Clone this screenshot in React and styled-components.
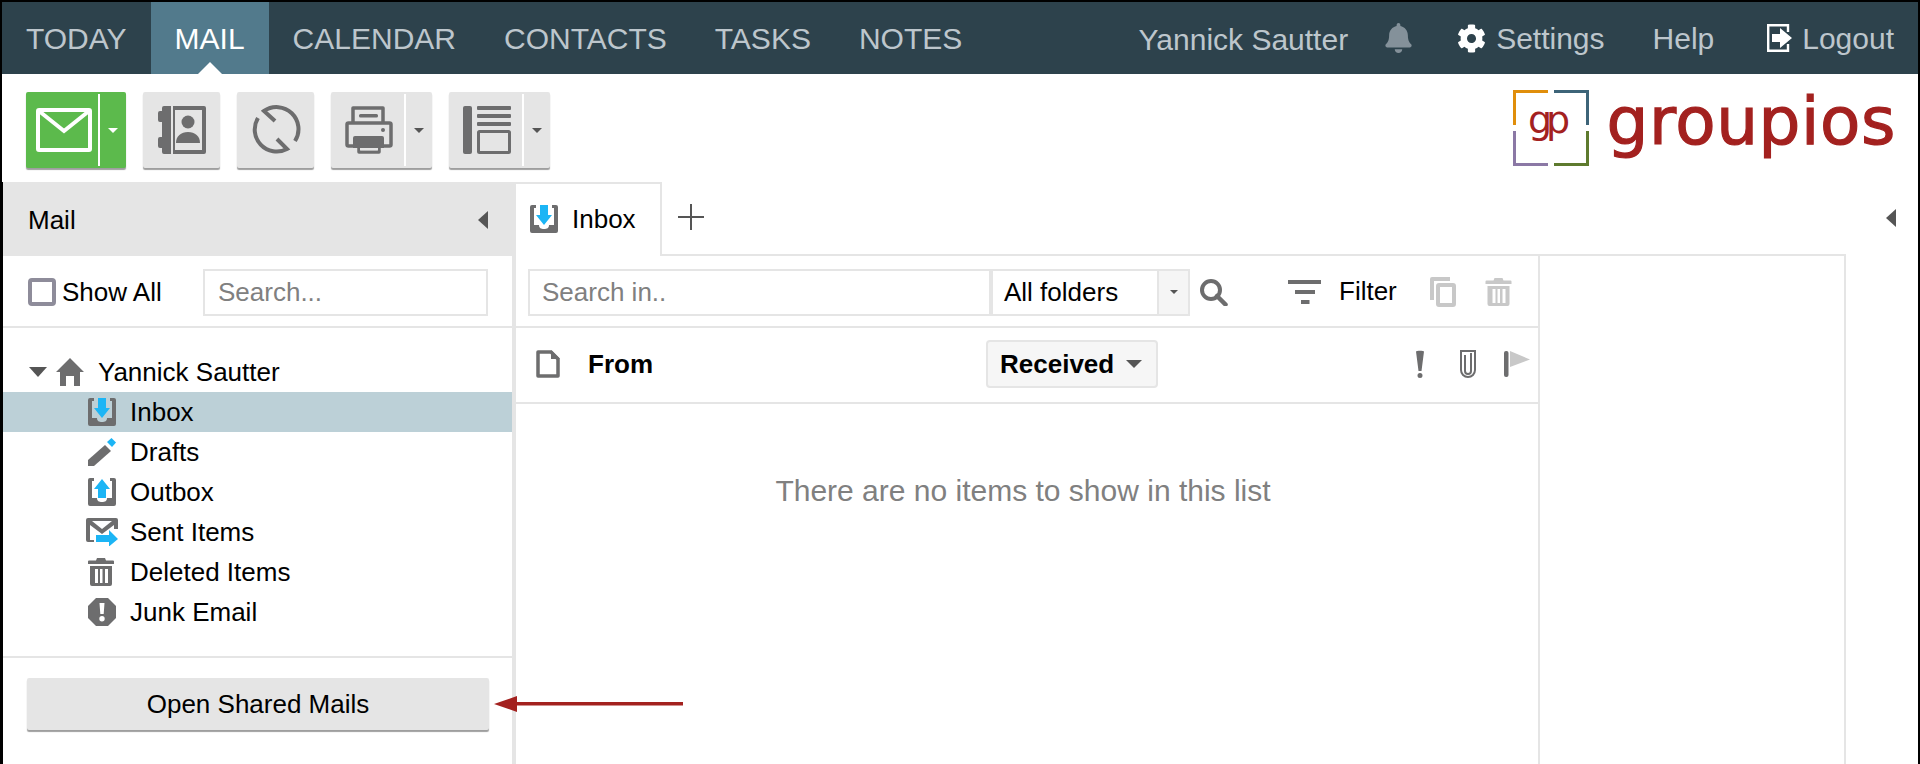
import React from 'react'
import styled, { createGlobalStyle } from 'styled-components'
import { FaBell, FaCog } from 'react-icons/fa'

const GlobalStyle = createGlobalStyle`
  html, body {
    margin: 0;
    height: 764px;
    overflow: hidden;
    background: white;
    font-family: "Liberation Sans", Arial, sans-serif;
    color: black;
  }
  * { box-sizing: border-box; }
`

const GRAY = '#6d6d6e'
const LINE = '#e5e5e5'
const BLUE = '#1cb5f5'

const Page = styled.div`
  position: relative;
  width: 1920px;
  height: 764px;
  overflow: hidden;
  border: solid black;
  border-width: 2px 2px 0 2px;
  display: flex;
  flex-direction: column;
`

/* top nav */
const Nav = styled.nav`
  height: 72px;
  flex: none;
  background: #2d424c;
  display: flex;
  align-items: stretch;
  font-size: 30px;
  color: #bdc6cc;
  padding-right: 24px;
`
const NavItem = styled.a`
  position: relative;
  display: flex;
  align-items: center;
  padding: 1px 24px 0;
  color: ${p => (p.$active ? 'white' : 'inherit')};
  background: ${p => (p.$active ? '#527a8c' : 'transparent')};
  &::after {
    content: '';
    display: ${p => (p.$active ? 'block' : 'none')};
    position: absolute;
    left: 50%;
    bottom: 0;
    margin-left: -12px;
    border-style: solid;
    border-width: 0 12px 12px 12px;
    border-color: transparent transparent white transparent;
  }
`
const NavRight = styled.div`
  margin-left: auto;
  display: flex;
  align-items: center;
`
const NavUser = styled.span`
  margin-right: 37px;
  margin-top: 3px;
`
const NavLink = styled.a`
  display: flex;
  align-items: center;
  gap: 10px;
  margin-top: 1px;
  margin-left: ${p => p.$gap}px;
  svg { flex: none; color: white; margin-top: -1px; }
`
const Bell = styled(FaBell)`
  color: #84919a;
  width: 27px;
  height: 30px;
`

/* toolbar */
const Toolbar = styled.div`
  height: 108px;
  flex: none;
  padding: 18px 22px 0 24px;
  display: flex;
  align-items: flex-start;
  gap: 17px;
`
const ToolButton = styled.div`
  height: 76px;
  width: ${p => p.$width}px;
  display: flex;
  border-radius: 2px;
  background: ${p => (p.$green ? '#5cba4c' : LINE)};
  box-shadow: 0 2px 1px rgba(0, 0, 0, 0.38);
`
const ToolMain = styled.div`
  flex: 1;
  display: flex;
  align-items: center;
  justify-content: center;
  padding-left: ${p => (p.$split ? 3 : 0)}px;
`
const ToolSplit = styled.div`
  width: 28px;
  flex: none;
  margin: 2px 0;
  border-left: 2px solid white;
  display: flex;
  align-items: center;
  justify-content: center;
`
const Caret = styled.span`
  display: block;
  border-style: solid;
  border-width: ${p => p.$h}px ${p => p.$w}px 0 ${p => p.$w}px;
  border-color: ${p => p.$color} transparent transparent transparent;
`
const Logo = styled.div`
  margin-left: auto;
  margin-top: -2px;
  display: flex;
  align-items: flex-start;
  gap: 17px;
`
const LogoWord = styled.span`
  font-family: "DejaVu Sans", sans-serif;
  font-size: 66px;
  line-height: 64px;
  color: #a3211f;
  letter-spacing: 0.6px;
  -webkit-text-stroke: 1.2px #a3211f;
`
const LogoMono = styled.text`
  font-family: "DejaVu Sans", sans-serif;
  font-size: 38px;
  letter-spacing: -6px;
  fill: #a3211f;
`

/* body */
const Body = styled.div`
  flex: 1;
  display: flex;
  min-height: 0;
`
const Sidebar = styled.aside`
  width: 514px;
  flex: none;
  border-left: 1px solid black;
  border-right: 4px solid ${LINE};
  display: flex;
  flex-direction: column;
`
const SideHead = styled.div`
  height: 74px;
  flex: none;
  background: ${LINE};
  margin-right: -4px;
  display: flex;
  align-items: center;
  justify-content: space-between;
  padding: 2px 28px 0 25px;
  font-size: 26px;
`
const LeftArrow = styled.span`
  display: block;
  border-style: solid;
  border-width: 9px 10px 9px 0;
  border-color: transparent #555 transparent transparent;
`
const SideFilter = styled.div`
  height: 72px;
  flex: none;
  border-bottom: 2px solid ${LINE};
  display: flex;
  align-items: center;
  padding: 2px 24px 0 25px;
  font-size: 26px;
`
const CheckBox = styled.span`
  width: 28px;
  height: 28px;
  margin-right: 6px;
  border: 4px solid #8e8c9a;
  border-radius: 4px;
`
const TextField = styled.input`
  border: 2px solid ${LINE};
  outline: none;
  background: white;
  font: inherit;
  color: black;
  padding: 0 13px;
  height: 47px;
  &::placeholder { color: #808080; opacity: 1; }
`
const SideSearch = styled(TextField)`
  width: 285px;
  margin-left: auto;
`
const Tree = styled.div`
  height: 330px;
  flex: none;
  padding-top: 24px;
  border-bottom: 2px solid ${LINE};
  font-size: 26px;
`
const TreeRoot = styled.div`
  height: 40px;
  display: flex;
  align-items: center;
  padding-left: 26px;
`
const TreeToggle = styled.span`
  display: block;
  border-style: solid;
  border-width: 10px 9px 0 9px;
  border-color: #555 transparent transparent transparent;
  margin-right: 9px;
`
const TreeRootLabel = styled.span`
  margin-left: 14px;
`
const TreeRow = styled.div`
  height: 40px;
  display: flex;
  align-items: center;
  gap: 14px;
  padding-left: 85px;
  background: ${p => (p.$active ? '#bcd0d7' : 'transparent')};
`
const SideFoot = styled.div`
  padding: 20px 0 0 24px;
`
const WideButton = styled.button`
  display: block;
  width: 462px;
  height: 52px;
  border: none;
  border-radius: 2px;
  background: ${LINE};
  box-shadow: 0 2px 1px rgba(0, 0, 0, 0.38);
  font: inherit;
  font-size: 26px;
  color: black;
`
const Pointer = styled.svg`
  position: absolute;
  left: 492px;
  top: 692px;
`

/* content */
const Content = styled.main`
  flex: 1;
  min-width: 0;
  display: flex;
  flex-direction: column;
`
const TabBar = styled.div`
  height: 74px;
  flex: none;
  display: flex;
`
const Tab = styled.div`
  width: 146px;
  border: solid ${LINE};
  border-width: 2px 2px 0 0;
  display: flex;
  align-items: center;
  gap: 14px;
  padding: 0 0 2px 14px;
  font-size: 26px;
`
const TabRest = styled.div`
  width: 1184px;
  border-bottom: 2px solid ${LINE};
  display: flex;
  align-items: center;
  padding: 0 0 2px 16px;
`
const TabEnd = styled.div`
  flex: 1;
  display: flex;
  align-items: center;
  justify-content: flex-end;
  padding: 0 22px 2px 0;
`
const Panel = styled.div`
  width: 1330px;
  flex: 1;
  min-height: 0;
  border-right: 2px solid ${LINE};
`
const List = styled.section`
  width: 1024px;
  height: 100%;
  border-right: 2px solid ${LINE};
`
const SearchRow = styled.div`
  height: 72px;
  border-bottom: 2px solid ${LINE};
  display: flex;
  align-items: center;
  padding: 2px 0 0 12px;
  font-size: 26px;
`
const SearchField = styled(TextField)`
  width: 463px;
  flex: none;
  padding: 0 12px;
`
const Select = styled.div`
  width: 199px;
  flex: none;
  height: 47px;
  border: 2px solid ${LINE};
  display: flex;
  align-items: center;
  padding-left: 11px;
`
const SelectCaret = styled.span`
  margin-left: auto;
  width: 31px;
  align-self: stretch;
  background: #f5f5f5;
  border-left: 2px solid ${LINE};
  display: flex;
  align-items: center;
  justify-content: center;
`
const FilterLabel = styled.span`
  margin: -2px 33px 0 18px;
`
const HeadRow = styled.div`
  height: 76px;
  border-bottom: 2px solid ${LINE};
  display: flex;
  align-items: center;
  padding: 0 0 2px 20px;
  font-size: 26px;
  font-weight: bold;
`
const FromLabel = styled.span`
  margin-left: 28px;
`
const SortButton = styled.div`
  width: 172px;
  flex: none;
  height: 48px;
  margin-left: 333px;
  border: 2px solid ${LINE};
  border-radius: 4px;
  background: #f6f6f6;
  display: flex;
  align-items: center;
  gap: 12px;
  padding-left: 12px;
`
const HeadIcons = styled.div`
  margin-left: 257px;
  display: flex;
  align-items: center;
  gap: 35px;
`
const Empty = styled.div`
  height: 174px;
  display: flex;
  align-items: center;
  justify-content: center;
  padding-right: 8px;
  font-size: 30px;
  color: #808080;
`
const Tone = styled.svg`
  flex: none;
  display: block;
  color: ${p => p.$color || GRAY};
  margin: ${p => p.$m || 0};
`

/* drawn icons */
const TrayBody = 'M2 0h4v3H4v17h5c0 3 2 4 5 4s5-1 5-4h5V3h-2V0h4a2 2 0 0 1 2 2v24a2 2 0 0 1-2 2H2a2 2 0 0 1-2-2V2a2 2 0 0 1 2-2z'

const InboxIcon = () => (
  <Tone width="28" height="28" viewBox="0 0 28 28">
    <path d={TrayBody} fill="currentColor" />
    <path d="M10 0h8v10h4l-8 10-8-10h4z" fill={BLUE} />
  </Tone>
)
const OutboxIcon = () => (
  <Tone width="28" height="28" viewBox="0 0 28 28">
    <path d={TrayBody} fill="currentColor" />
    <path d="M14 1l8 10h-4v9h-8v-9H6z" fill={BLUE} />
  </Tone>
)
const DraftsIcon = () => (
  <Tone width="28" height="28" viewBox="0 0 28 28">
    <path d="M0 22L17 7l6 6L6 28H0z" fill="currentColor" />
    <path d="M23.500 0L28 4.500 24 9l-5-5z" fill={BLUE} />
  </Tone>
)
const SentIcon = () => (
  <Tone width="32" height="28" viewBox="0 0 32 28" $m="0 -2px">
    <path d="M2 0h28a2 2 0 0 1 2 2v9h-4V7l-12 9L4 7v15h4v2H2a2 2 0 0 1-2-2V2a2 2 0 0 1 2-2zM6 3l10 8 10-8z" fill="currentColor" fillRule="evenodd" />
    <path d="M10 17h13v-5l9 9-9 7.500V24H10z" fill={BLUE} />
  </Tone>
)
const TrashIcon = ({ color, w = 26, h = 28, m = '0 2px 0 0' }) => (
  <Tone width={w} height={h} viewBox="0 0 26 28" $color={color} $m={m}>
    <path d="M9 0h8l1 2.500h7a1 1 0 0 1 1 1V6H0V3.500a1 1 0 0 1 1-1h7zM2 8h22v18a2 2 0 0 1-2 2H4a2 2 0 0 1-2-2zM7 11v14h3V11zm5 0v14h2.500V11zm5 0v14h3V11z" fill="currentColor" fillRule="evenodd" />
  </Tone>
)
const JunkIcon = () => (
  <Tone width="28" height="28" viewBox="0 0 28 28">
    <path d="M8 0h12l8 8v12l-8 8H8l-8-8V8zM11.500 5l.8 11h3.400l.8-11zM14 18a2.700 2.700 0 1 0 0 5.400 2.700 2.700 0 0 0 0-5.400z" fill="currentColor" fillRule="evenodd" />
  </Tone>
)
const HomeIcon = () => (
  <Tone width="28" height="28" viewBox="0 0 28 28">
    <path d="M14 0l14 14h-4v14H4V14H0zM10 18v10h8V18z" fill="currentColor" fillRule="evenodd" />
  </Tone>
)
const MailIcon = () => (
  <Tone width="56" height="44" viewBox="0 0 56 44" $color="white">
    <rect x="2" y="2" width="52" height="40" rx="1" fill="none" stroke="currentColor" strokeWidth="4" />
    <path d="M3 3l25 20L53 3" fill="none" stroke="currentColor" strokeWidth="4" />
  </Tone>
)
const BookIcon = () => (
  <Tone width="48" height="48" viewBox="0 0 48 48">
    <path d="M6 0h40a2 2 0 0 1 2 2v44a2 2 0 0 1-2 2H6a2 2 0 0 1-2-2v-4H2a2 2 0 0 1-2-2v-7a2 2 0 0 1 2-2h2V16H2a2 2 0 0 1-2-2V7a2 2 0 0 1 2-2h2V2a2 2 0 0 1 2-2z" fill="currentColor" />
    <rect x="17" y="4" width="27" height="40" fill={LINE} />
    <rect x="13" y="0" width="2" height="48" fill={LINE} />
    <circle cx="30" cy="16" r="6.500" fill="currentColor" />
    <path d="M18 37c0-7 5-11 12-11s12 4 12 11z" fill="currentColor" />
  </Tone>
)
const SyncIcon = () => (
  <Tone width="52" height="52" viewBox="0 0 52 52">
    <path d="M25 17L14 7A22 22 0 0 1 45 37M27 35l10 10A22 22 0 0 1 8 14" fill="none" stroke="currentColor" strokeWidth="4" />
  </Tone>
)
const PrintIcon = () => (
  <Tone width="48" height="48" viewBox="0 0 48 48">
    <path d="M8 16V2h30v14M14 40v6h20v-6" fill="none" stroke="currentColor" strokeWidth="3.500" strokeLinejoin="round" />
    <rect x="2" y="17" width="44" height="23" rx="1.500" fill="none" stroke="currentColor" strokeWidth="3.500" />
    <rect x="14" y="8" width="19" height="3.500" rx="1.500" fill="currentColor" />
    <circle cx="38" cy="24" r="2" fill="currentColor" />
    <path d="M10 30h27a2 2 0 0 1 2 2v10H8V32a2 2 0 0 1 2-2z" fill="currentColor" />
    <rect x="15" y="42" width="18" height="2.500" fill={LINE} />
  </Tone>
)
const LayoutIcon = () => (
  <Tone width="48" height="48" viewBox="0 0 48 48">
    <rect x="0" y="0" width="9" height="48" rx="2" fill="currentColor" />
    <rect x="14" y="0" width="34" height="4" rx="1" fill="currentColor" />
    <rect x="14" y="8" width="34" height="4" rx="1" fill="currentColor" />
    <rect x="14" y="16" width="34" height="4" rx="1" fill="currentColor" />
    <rect x="15.500" y="25.500" width="31" height="21" rx="1" fill="none" stroke="currentColor" strokeWidth="3" />
  </Tone>
)
const LogoutIcon = () => (
  <Tone width="25" height="28" viewBox="0 0 25 28" $color="white">
    <path d="M21 8V1.200H1.200v25.600H21V20" fill="none" stroke="currentColor" strokeWidth="2.400" />
    <path d="M5 10h8V4l12 10-12 10v-6H5z" fill="currentColor" />
  </Tone>
)
const SearchIcon = () => (
  <Tone width="28" height="27" viewBox="0 0 28 27" $m="0 0 0 10px">
    <circle cx="11" cy="11" r="9" fill="none" stroke="currentColor" strokeWidth="4" />
    <path d="M17 17l8.500 8.500" fill="none" stroke="currentColor" strokeWidth="4.500" strokeLinecap="round" />
  </Tone>
)
const FilterIcon = () => (
  <Tone width="33" height="24" viewBox="0 0 33 24" $m="0 0 0 60px">
    <path d="M0 0h33v4H0zM7 10h20v4H7zM13 20h8.500v4H13z" fill="currentColor" />
  </Tone>
)
const CopyIcon = () => (
  <Tone width="26" height="30" viewBox="0 0 26 30" $color="#c8c8c8" $m="0 29px 0 0">
    <path d="M2 0h18v4H4v19H0V2a2 2 0 0 1 2-2z" fill="currentColor" />
    <rect x="8" y="8" width="16" height="20" rx="1" fill="white" stroke="currentColor" strokeWidth="4" />
  </Tone>
)
const DocIcon = () => (
  <Tone width="24" height="28" viewBox="0 0 24 28">
    <path d="M2 2h13l7 7v17H2z" fill="none" stroke="currentColor" strokeWidth="3.500" strokeLinejoin="round" />
    <path d="M15 0l9 9h-9z" fill="currentColor" />
  </Tone>
)
const BangIcon = () => (
  <Tone width="10" height="28" viewBox="0 0 10 28">
    <path d="M1 1.500C1 .5 9 .5 9 1.500L6.500 21h-3zM5 23a2.500 2.500 0 1 1 0 5 2.500 2.500 0 0 1 0-5z" fill="currentColor" />
  </Tone>
)
const ClipIcon = () => (
  <Tone width="16" height="28" viewBox="0 0 16 28">
    <path d="M1 1h14v19a7 7 0 0 1-14 0zM5 5v16a3 3 0 0 0 6 0V3" fill="none" stroke="currentColor" strokeWidth="2" />
  </Tone>
)
const FlagIcon = () => (
  <Tone width="26" height="26" viewBox="0 0 26 26" $m="0 0 0 -7px">
    <rect x="0" y="0" width="4.500" height="26" rx="2" fill="currentColor" />
    <path d="M6 0l20 8.500L6 16z" fill="#c8c8c8" />
  </Tone>
)

const Mark = () => (
  <svg width="76" height="76" viewBox="0 0 76 76">
    <path d="M35 1.500H1.500V35" fill="none" stroke="#e08e0b" strokeWidth="3" />
    <path d="M41 1.500h33.500V35" fill="none" stroke="#3d6478" strokeWidth="3" />
    <path d="M35 74.500H1.500V41" fill="none" stroke="#8b78a5" strokeWidth="3" />
    <path d="M41 74.500h33.500V41" fill="none" stroke="#5e7a2e" strokeWidth="3" />
    <LogoMono x="15" y="43">gp</LogoMono>
  </svg>
)

const folders = [
  { name: 'Inbox', icon: InboxIcon, active: true },
  { name: 'Drafts', icon: DraftsIcon },
  { name: 'Outbox', icon: OutboxIcon },
  { name: 'Sent Items', icon: SentIcon },
  { name: 'Deleted Items', icon: TrashIcon },
  { name: 'Junk Email', icon: JunkIcon },
]

const App = () => (
  <Page>
    <GlobalStyle />
    <Nav>
      <NavItem>TODAY</NavItem>
      <NavItem $active>MAIL</NavItem>
      <NavItem>CALENDAR</NavItem>
      <NavItem>CONTACTS</NavItem>
      <NavItem>TASKS</NavItem>
      <NavItem>NOTES</NavItem>
      <NavRight>
        <NavUser>Yannick Sautter</NavUser>
        <Bell />
        <NavLink $gap={45}><FaCog size={29} />Settings</NavLink>
        <NavLink $gap={48}>Help</NavLink>
        <NavLink $gap={53}><LogoutIcon />Logout</NavLink>
      </NavRight>
    </Nav>

    <Toolbar>
      <ToolButton $green $width={100}>
        <ToolMain $split><MailIcon /></ToolMain>
        <ToolSplit><Caret $w={5} $h={5} $color="white" /></ToolSplit>
      </ToolButton>
      <ToolButton $width={77}><ToolMain><BookIcon /></ToolMain></ToolButton>
      <ToolButton $width={77}><ToolMain><SyncIcon /></ToolMain></ToolButton>
      <ToolButton $width={101}>
        <ToolMain $split><PrintIcon /></ToolMain>
        <ToolSplit><Caret $w={5} $h={5} $color="#555" /></ToolSplit>
      </ToolButton>
      <ToolButton $width={101}>
        <ToolMain $split><LayoutIcon /></ToolMain>
        <ToolSplit><Caret $w={5} $h={5} $color="#555" /></ToolSplit>
      </ToolButton>
      <Logo>
        <Mark />
        <LogoWord>groupios</LogoWord>
      </Logo>
    </Toolbar>

    <Body>
      <Sidebar>
        <SideHead>Mail<LeftArrow /></SideHead>
        <SideFilter>
          <CheckBox />
          Show All
          <SideSearch placeholder="Search..." readOnly />
        </SideFilter>
        <Tree>
          <TreeRoot>
            <TreeToggle />
            <HomeIcon />
            <TreeRootLabel>Yannick Sautter</TreeRootLabel>
          </TreeRoot>
          {folders.map(f => (
            <TreeRow key={f.name} $active={f.active}>
              <f.icon />
              {f.name}
            </TreeRow>
          ))}
        </Tree>
        <SideFoot>
          <WideButton>Open Shared Mails</WideButton>
        </SideFoot>
      </Sidebar>

      <Content>
        <TabBar>
          <Tab><InboxIcon />Inbox</Tab>
          <TabRest>
            <svg width="26" height="26" viewBox="0 0 26 26">
              <path d="M13 0v26M0 13h26" stroke="#555" strokeWidth="2" />
            </svg>
          </TabRest>
          <TabEnd><LeftArrow /></TabEnd>
        </TabBar>
        <Panel>
          <List>
            <SearchRow>
              <SearchField placeholder="Search in.." readOnly />
              <Select>
                All folders
                <SelectCaret><Caret $w={4} $h={4} $color="#555" /></SelectCaret>
              </Select>
              <SearchIcon />
              <FilterIcon />
              <FilterLabel>Filter</FilterLabel>
              <CopyIcon />
              <TrashIcon color="#c8c8c8" w={27} h={28} m="0" />
            </SearchRow>
            <HeadRow>
              <DocIcon />
              <FromLabel>From</FromLabel>
              <SortButton>Received<Caret $w={8} $h={8} $color="#555" /></SortButton>
              <HeadIcons>
                <BangIcon />
                <ClipIcon />
                <FlagIcon />
              </HeadIcons>
            </HeadRow>
            <Empty>There are no items to show in this list</Empty>
          </List>
        </Panel>
      </Content>
    </Body>

    <Pointer width="189" height="20" viewBox="0 0 189 20">
      <path d="M0 10l23-8v6h166v3.500H23V18z" fill="#a3211f" />
    </Pointer>
  </Page>
)

export default App
